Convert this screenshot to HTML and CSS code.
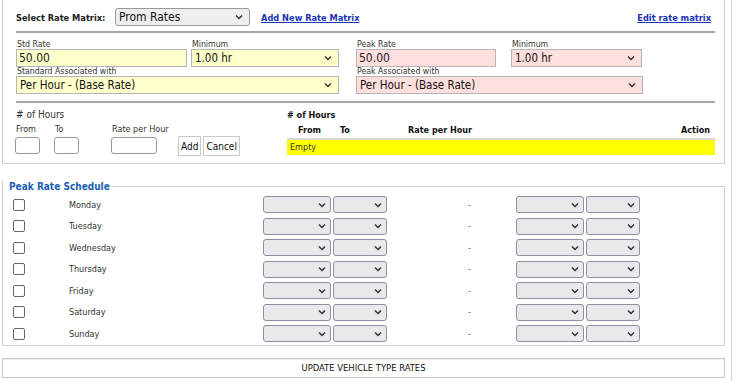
FILE: index.html
```html
<!DOCTYPE html>
<html>
<head>
<meta charset="utf-8">
<link rel="stylesheet" href="styles.css">
</head>
<body>
<div class="page">
  <div class="panel">
    <div class="toprow">
      <span class="lbl-strong">Select Rate Matrix:</span>
      <div class="sel sel-matrix"><span>Prom Rates</span><svg class="chev" width="8" height="6" viewBox="0 0 8 6"><path d="M1 1.5 L4 4.5 L7 1.5" fill="none" stroke="#333" stroke-width="1.5"/></svg></div>
      <a class="link add-link" href="#">Add New Rate Matrix</a>
      <a class="link edit-link" href="#">Edit rate matrix</a>
    </div>
    <div class="rule"></div>
    <div class="rates">
      <div class="ratecol">
        <div class="pair">
          <div class="field f-std">
            <div class="flabel">Std Rate</div>
            <div class="inp yellow">50.00</div>
          </div>
          <div class="field f-min">
            <div class="flabel">Minimum</div>
            <div class="sel yellow"><span>1.00 hr</span><svg class="chev" width="8" height="6" viewBox="0 0 8 6"><path d="M1 1.5 L4 4.5 L7 1.5" fill="none" stroke="#333" stroke-width="1.5"/></svg></div>
          </div>
        </div>
        <div class="field f-assoc">
          <div class="flabel">Standard Associated with</div>
          <div class="sel yellow"><span>Per Hour - (Base Rate)</span><svg class="chev" width="8" height="6" viewBox="0 0 8 6"><path d="M1 1.5 L4 4.5 L7 1.5" fill="none" stroke="#333" stroke-width="1.5"/></svg></div>
        </div>
      </div>
      <div class="ratecol">
        <div class="pair">
          <div class="field f-peak">
            <div class="flabel">Peak Rate</div>
            <div class="inp pink">50.00</div>
          </div>
          <div class="field f-pmin">
            <div class="flabel">Minimum</div>
            <div class="sel pink"><span>1.00 hr</span><svg class="chev" width="8" height="6" viewBox="0 0 8 6"><path d="M1 1.5 L4 4.5 L7 1.5" fill="none" stroke="#333" stroke-width="1.5"/></svg></div>
          </div>
        </div>
        <div class="field f-passoc">
          <div class="flabel">Peak Associated with</div>
          <div class="sel pink"><span>Per Hour - (Base Rate)</span><svg class="chev" width="8" height="6" viewBox="0 0 8 6"><path d="M1 1.5 L4 4.5 L7 1.5" fill="none" stroke="#333" stroke-width="1.5"/></svg></div>
        </div>
      </div>
    </div>
    <div class="rule"></div>
    <div class="hours">
      <div class="hours-form">
        <div class="hlabel">#&nbsp;of Hours</div>
        <div class="hfields">
          <div class="hfield w-from"><div class="flabel">From</div><div class="box b-from"></div></div>
          <div class="hfield w-to"><div class="flabel">To</div><div class="box b-to"></div></div>
          <div class="hfield w-rate"><div class="flabel">Rate per Hour</div><div class="box b-rate"></div></div>
          <div class="btns"><span class="btn">Add</span><span class="btn">Cancel</span></div>
        </div>
      </div>
      <div class="hours-table">
        <div class="ht-title">#&nbsp;of Hours</div>
        <div class="ht-head">
          <span class="th th-from">From</span>
          <span class="th th-to">To</span>
          <span class="th th-rate">Rate per Hour</span>
          <span class="th th-action">Action</span>
        </div>
        <div class="ht-empty">Empty</div>
      </div>
    </div>
  </div>

  <div class="schedule">
    <div class="legend-row"><span class="legend">Peak Rate Schedule</span><span class="legend-line"></span></div>
    <div class="sched-body">
      <div class="srow"><span class="cb"></span><span class="day">Monday</span><div class="sel gs s1"><span></span><svg class="chev" width="8" height="6" viewBox="0 0 8 6"><path d="M1 1.5 L4 4.5 L7 1.5" fill="none" stroke="#333" stroke-width="1.5"/></svg></div><div class="sel gs s2"><span></span><svg class="chev" width="8" height="6" viewBox="0 0 8 6"><path d="M1 1.5 L4 4.5 L7 1.5" fill="none" stroke="#333" stroke-width="1.5"/></svg></div><span class="dash">-</span><div class="sel gs s1"><span></span><svg class="chev" width="8" height="6" viewBox="0 0 8 6"><path d="M1 1.5 L4 4.5 L7 1.5" fill="none" stroke="#333" stroke-width="1.5"/></svg></div><div class="sel gs s2"><span></span><svg class="chev" width="8" height="6" viewBox="0 0 8 6"><path d="M1 1.5 L4 4.5 L7 1.5" fill="none" stroke="#333" stroke-width="1.5"/></svg></div></div>
      <div class="srow"><span class="cb"></span><span class="day">Tuesday</span><div class="sel gs s1"><span></span><svg class="chev" width="8" height="6" viewBox="0 0 8 6"><path d="M1 1.5 L4 4.5 L7 1.5" fill="none" stroke="#333" stroke-width="1.5"/></svg></div><div class="sel gs s2"><span></span><svg class="chev" width="8" height="6" viewBox="0 0 8 6"><path d="M1 1.5 L4 4.5 L7 1.5" fill="none" stroke="#333" stroke-width="1.5"/></svg></div><span class="dash">-</span><div class="sel gs s1"><span></span><svg class="chev" width="8" height="6" viewBox="0 0 8 6"><path d="M1 1.5 L4 4.5 L7 1.5" fill="none" stroke="#333" stroke-width="1.5"/></svg></div><div class="sel gs s2"><span></span><svg class="chev" width="8" height="6" viewBox="0 0 8 6"><path d="M1 1.5 L4 4.5 L7 1.5" fill="none" stroke="#333" stroke-width="1.5"/></svg></div></div>
      <div class="srow"><span class="cb"></span><span class="day">Wednesday</span><div class="sel gs s1"><span></span><svg class="chev" width="8" height="6" viewBox="0 0 8 6"><path d="M1 1.5 L4 4.5 L7 1.5" fill="none" stroke="#333" stroke-width="1.5"/></svg></div><div class="sel gs s2"><span></span><svg class="chev" width="8" height="6" viewBox="0 0 8 6"><path d="M1 1.5 L4 4.5 L7 1.5" fill="none" stroke="#333" stroke-width="1.5"/></svg></div><span class="dash">-</span><div class="sel gs s1"><span></span><svg class="chev" width="8" height="6" viewBox="0 0 8 6"><path d="M1 1.5 L4 4.5 L7 1.5" fill="none" stroke="#333" stroke-width="1.5"/></svg></div><div class="sel gs s2"><span></span><svg class="chev" width="8" height="6" viewBox="0 0 8 6"><path d="M1 1.5 L4 4.5 L7 1.5" fill="none" stroke="#333" stroke-width="1.5"/></svg></div></div>
      <div class="srow"><span class="cb"></span><span class="day">Thursday</span><div class="sel gs s1"><span></span><svg class="chev" width="8" height="6" viewBox="0 0 8 6"><path d="M1 1.5 L4 4.5 L7 1.5" fill="none" stroke="#333" stroke-width="1.5"/></svg></div><div class="sel gs s2"><span></span><svg class="chev" width="8" height="6" viewBox="0 0 8 6"><path d="M1 1.5 L4 4.5 L7 1.5" fill="none" stroke="#333" stroke-width="1.5"/></svg></div><span class="dash">-</span><div class="sel gs s1"><span></span><svg class="chev" width="8" height="6" viewBox="0 0 8 6"><path d="M1 1.5 L4 4.5 L7 1.5" fill="none" stroke="#333" stroke-width="1.5"/></svg></div><div class="sel gs s2"><span></span><svg class="chev" width="8" height="6" viewBox="0 0 8 6"><path d="M1 1.5 L4 4.5 L7 1.5" fill="none" stroke="#333" stroke-width="1.5"/></svg></div></div>
      <div class="srow"><span class="cb"></span><span class="day">Friday</span><div class="sel gs s1"><span></span><svg class="chev" width="8" height="6" viewBox="0 0 8 6"><path d="M1 1.5 L4 4.5 L7 1.5" fill="none" stroke="#333" stroke-width="1.5"/></svg></div><div class="sel gs s2"><span></span><svg class="chev" width="8" height="6" viewBox="0 0 8 6"><path d="M1 1.5 L4 4.5 L7 1.5" fill="none" stroke="#333" stroke-width="1.5"/></svg></div><span class="dash">-</span><div class="sel gs s1"><span></span><svg class="chev" width="8" height="6" viewBox="0 0 8 6"><path d="M1 1.5 L4 4.5 L7 1.5" fill="none" stroke="#333" stroke-width="1.5"/></svg></div><div class="sel gs s2"><span></span><svg class="chev" width="8" height="6" viewBox="0 0 8 6"><path d="M1 1.5 L4 4.5 L7 1.5" fill="none" stroke="#333" stroke-width="1.5"/></svg></div></div>
      <div class="srow"><span class="cb"></span><span class="day">Saturday</span><div class="sel gs s1"><span></span><svg class="chev" width="8" height="6" viewBox="0 0 8 6"><path d="M1 1.5 L4 4.5 L7 1.5" fill="none" stroke="#333" stroke-width="1.5"/></svg></div><div class="sel gs s2"><span></span><svg class="chev" width="8" height="6" viewBox="0 0 8 6"><path d="M1 1.5 L4 4.5 L7 1.5" fill="none" stroke="#333" stroke-width="1.5"/></svg></div><span class="dash">-</span><div class="sel gs s1"><span></span><svg class="chev" width="8" height="6" viewBox="0 0 8 6"><path d="M1 1.5 L4 4.5 L7 1.5" fill="none" stroke="#333" stroke-width="1.5"/></svg></div><div class="sel gs s2"><span></span><svg class="chev" width="8" height="6" viewBox="0 0 8 6"><path d="M1 1.5 L4 4.5 L7 1.5" fill="none" stroke="#333" stroke-width="1.5"/></svg></div></div>
      <div class="srow"><span class="cb"></span><span class="day">Sunday</span><div class="sel gs s1"><span></span><svg class="chev" width="8" height="6" viewBox="0 0 8 6"><path d="M1 1.5 L4 4.5 L7 1.5" fill="none" stroke="#333" stroke-width="1.5"/></svg></div><div class="sel gs s2"><span></span><svg class="chev" width="8" height="6" viewBox="0 0 8 6"><path d="M1 1.5 L4 4.5 L7 1.5" fill="none" stroke="#333" stroke-width="1.5"/></svg></div><span class="dash">-</span><div class="sel gs s1"><span></span><svg class="chev" width="8" height="6" viewBox="0 0 8 6"><path d="M1 1.5 L4 4.5 L7 1.5" fill="none" stroke="#333" stroke-width="1.5"/></svg></div><div class="sel gs s2"><span></span><svg class="chev" width="8" height="6" viewBox="0 0 8 6"><path d="M1 1.5 L4 4.5 L7 1.5" fill="none" stroke="#333" stroke-width="1.5"/></svg></div></div>
    </div>
  </div>

  <div class="update">UPDATE VEHICLE TYPE RATES</div>
</div>
</body>
</html>
```

FILE: styles.css
```css
* { box-sizing: border-box; }
html, body { margin: 0; padding: 0; background: #fff; }
body {
  font-family: "DejaVu Sans Condensed", "DejaVu Sans", sans-serif;
  color: #222;
  font-size: 10px;
  width: 737px;
  height: 381px;
  overflow: hidden;
}
.page {
  width: 732px;
  height: 381px;
  border-right: 1px solid #d4d4d4;
  padding-left: 2px;
  padding-right: 6px;
}
.panel {
  border: 1px solid #d0d0d0;
  border-top: none;
  height: 164px;
  padding: 8px 9px 0 13px;
}
.toprow {
  display: flex;
  align-items: center;
  height: 18px;
}
.lbl-strong { font-weight: bold; font-size: 9.2px; color: #222; width: 99px; }
.sel {
  display: flex;
  align-items: center;
  justify-content: space-between;
  border: 1px solid #a9a9a9;
  background: #fff;
  padding: 0 6px 0 3px;
  font-size: 12px;
  color: #111;
  height: 18px;
}
.sel-matrix {
  width: 135px;
  background: #efefef;
  border-radius: 3px;
  border-color: #999;
}
.chev { flex: none; }
.link {
  color: #1a33b5;
  font-weight: bold;
  font-size: 9.2px;
  text-decoration: underline;
}
.add-link { margin-left: 11px; }
.edit-link { margin-left: auto; margin-right: 4px; }
.rule {
  height: 2px;
  background: #a8a8a8;
  margin-top: 5px;
}
.rates {
  display: flex;
  padding-top: 7px;
}
.rates + .rule { margin-top: 7px; }
.ratecol { display: flex; flex-direction: column; }
.ratecol + .ratecol { margin-left: 17px; }
.pair { display: flex; }
.field { display: flex; flex-direction: column; }
.flabel { font-size: 8.7px; color: #333; height: 9px; line-height: 9px; padding-left: 1px; }
.inp {
  border: 1px solid #b5b5b5;
  height: 18px;
  font-size: 12px;
  padding-left: 2px;
  line-height: 16px;
}
.rates .sel { font-size: 11.5px; }
.yellow { background: #ffffcc; }
.pink { background: #ffdede; }
.f-std .inp { width: 171px; }
.f-min { margin-left: 4px; }
.f-min .sel { width: 148px; }
.f-assoc .sel { width: 323px; }
.f-peak .inp { width: 140px; }
.f-pmin { margin-left: 15px; }
.f-pmin .sel { width: 131px; }
.f-passoc .sel { width: 287px; }
.rates .sel { border-color: #b5b5b5; }

.hours { display: flex; padding-top: 5px; }
.hours-form { width: 274px; }
.hlabel { font-size: 10px; color: #333; height: 14px; line-height: 14px; }
.hfields { display: flex; align-items: flex-end; margin-left: -1px; }
.hfield { display: flex; flex-direction: column; }
.hfield .flabel { height: 15px; line-height: 15px; font-size: 9px; }
.box {
  height: 17px;
  border: 1px solid #999;
  border-radius: 3px;
  background: #fff;
  margin-bottom: 1px;
}
.w-from { width: 39px; }
.b-from { width: 25px; }
.w-to { width: 57px; }
.b-to { width: 25px; }
.w-rate { width: 67px; }
.b-rate { width: 46px; }
.btns { display: flex; gap: 2px; margin-bottom: -1px; }
.btn {
  display: inline-flex;
  align-items: center;
  height: 20px;
  padding: 0 2px;
  border: 1px solid #c9c9c9;
  background: #fff;
  font-size: 10px;
  color: #111;
}
.hours-table { flex: 1; }
.ht-title { font-weight: bold; font-size: 9px; height: 14px; line-height: 14px; color: #111; }
.ht-head { display: flex; height: 16px; align-items: center; font-weight: bold; font-size: 9px; color: #111; }
.th-from { margin-left: 11px; width: 42px; }
.th-to { width: 68px; }
.th-rate { flex: 1; }
.th-action { margin-right: 5px; }
.ht-empty {
  background: #ffff00;
  border-top: 2px solid #d9d9d9;
  height: 17px;
  line-height: 15px;
  font-size: 9px;
  color: #333;
  padding-left: 3px;
  width: 428px;
}

.schedule {
  margin-top: 22px;
  border: 1px solid #d0d0d0;
  border-top: none;
  height: 160px;
}
.legend-row { display: flex; align-items: center; height: 1px; margin-left: -1px; }
.legend-line { flex: 1; height: 1px; background: #d0d0d0; }
.legend {
  color: #1a5fb4;
  font-weight: bold;
  font-size: 10px;
  padding: 0 1px 0 6px;
  background: linear-gradient(#fff, #fff);
  border-left: 1px solid #d0d0d0;
  line-height: 12px;
  margin-top: 1px;
}
.sched-body { padding-top: 7px; }
.srow {
  display: flex;
  align-items: center;
  height: 21.5px;
}
.cb {
  width: 12px;
  height: 12px;
  border: 1px solid #666;
  border-radius: 2px;
  margin-left: 10px;
  background: #fff;
}
.day { width: 194px; margin-left: 44px; font-size: 9px; color: #333; }
.gs {
  height: 17px;
  background: #e9e9ed;
  border: 1px solid #8f8f9d;
  border-radius: 3px;
  padding-right: 4px;
}
.gs .chev { width: 8px; }
.s1 { width: 68px; }
.s2 { width: 54px; margin-left: 2px; }
.dash { width: 129px; padding-left: 81px; color: #666; font-size: 9px; }

.update {
  margin-top: 12px;
  height: 20px;
  border: 1px solid #c9c9c9;
  background: #fff;
  text-align: center;
  line-height: 18px;
  font-size: 9.4px;
  color: #111;
  box-shadow: inset 0 1px 0 #eee;
}
```
